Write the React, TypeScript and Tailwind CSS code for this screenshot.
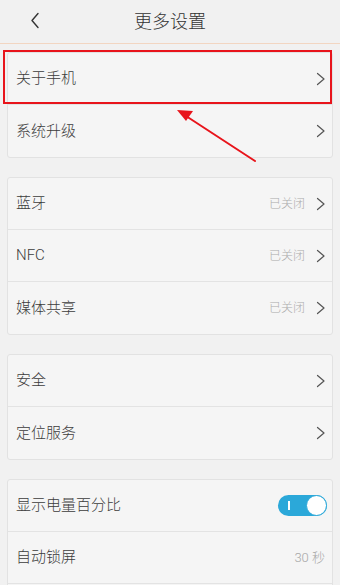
import React from "react";

const Chevron = () => (
  <svg width="10" height="14" viewBox="0 0 10 14" className="shrink-0">
    <path d="M1.5 1.5 L8 7 L1.5 12.5" fill="none" stroke="#555" strokeWidth="1.2" strokeLinecap="round" strokeLinejoin="round" />
  </svg>
);

type RowProps = { label: string; value?: string; chevron?: boolean; toggle?: boolean; last?: boolean; big?: boolean };

const Row = ({ label, value, chevron = true, toggle, last, big }: RowProps) => (
  <div className={`flex h-[52px] items-center pl-[8px] pr-[6px] ${last ? "" : "border-b border-[#e3e3e3]"}`}>
    <span className="flex-1 text-[15px] font-light text-[#3c3c3c]">{label}</span>
    {value && (
      <span className={big ? "mr-[1px] text-[13px] font-light text-[#a8a8a8]" : "mr-[11px] text-[12px] font-light text-[#ababab]"}>
        {value}
      </span>
    )}
    {toggle && (
      <div className="relative mr-[-1px] h-[21px] w-[49px] rounded-full bg-[#2ba8d9]">
        <div className="absolute left-[10px] top-[6px] h-[9px] w-[1.5px] bg-white" />
        <div className="absolute right-0 top-0 h-[21px] w-[21px] rounded-full border-[1.5px] border-[#2ba8d9] bg-white" />
      </div>
    )}
    {chevron && !toggle && <Chevron />}
  </div>
);

const Card = ({ children }: { children: React.ReactNode }) => (
  <div className="mx-[7px] rounded-[3px] border border-[#e2e2e2] bg-[#f5f5f5]">{children}</div>
);

export default function App() {
  return (
    <div
      className="relative h-[585px] w-[340px] overflow-hidden bg-[#f1f1f1]"
      style={{ fontFamily: 'Roboto, "Noto Sans CJK SC", sans-serif' }}
    >
      <div className="relative flex h-[44px] items-center justify-center border-b border-[#f2d6c2] bg-[#f1f1f1]">
        <svg width="10" height="17" viewBox="0 0 10 17" className="absolute left-[30px] top-[12px]">
          <path d="M8 1.5 L2 8.5 L8 15.5" fill="none" stroke="#333" strokeWidth="1.4" strokeLinecap="round" strokeLinejoin="round" />
        </svg>
        <span className="text-[18px] font-light text-[#333]">更多设置</span>
      </div>
      <div className="flex flex-col gap-[19px] pt-[8px]">
        <Card>
          <Row label="关于手机" />
          <Row label="系统升级" last />
        </Card>
        <Card>
          <Row label="蓝牙" value="已关闭" />
          <Row label="NFC" value="已关闭" />
          <Row label="媒体共享" value="已关闭" last />
        </Card>
        <Card>
          <Row label="安全" />
          <Row label="定位服务" last />
        </Card>
        <Card>
          <Row label="显示电量百分比" toggle />
          <Row label="自动锁屏" value="30 秒" chevron={false} big />
          <Row label="" chevron={false} last />
        </Card>
      </div>
      <div className="pointer-events-none absolute left-[3px] top-[50px] h-[54px] w-[329px] border-2 border-[#e8141b]" />
      <svg className="pointer-events-none absolute left-0 top-0" width="340" height="585" viewBox="0 0 340 585">
        <line x1="255" y1="161" x2="186" y2="116" stroke="#e8141b" strokeWidth="2" strokeLinecap="round" />
        <polygon points="177,110 193,111 186,121" fill="#e8141b" />
      </svg>
    </div>
  );
}
